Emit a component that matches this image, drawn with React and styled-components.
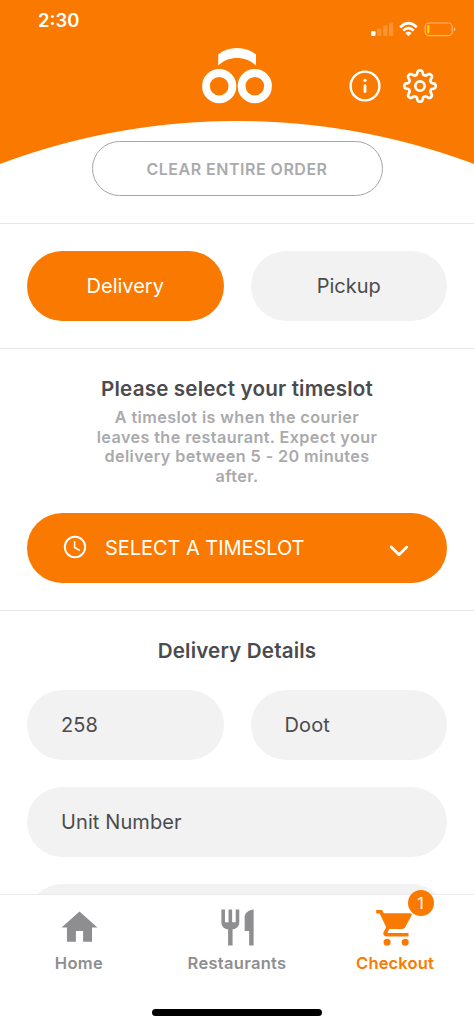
import React from 'react'
import styled, { createGlobalStyle } from 'styled-components'
import { MdHome, MdRestaurant } from 'react-icons/md'

const orange = '#FA7900'

// eight rounded teeth around the centre
const gearPath = () => {
  const points = []
  for (let i = 0; i < 160; i++) {
    const a = (i / 160) * Math.PI * 2
    const w = Math.cos(a * 8)
    const r = 13.6 + 2.1 * Math.tanh(1.6 * w) / Math.tanh(1.6)
    points.push(`${(18 + r * Math.sin(a)).toFixed(2)} ${(18 - r * Math.cos(a)).toFixed(2)}`)
  }
  return `M${points.join('L')}Z`
}

function StatusIcons() {
  return (
    <svg width="86" height="18" viewBox="0 0 86 18" fill="none">
      <rect x="1" y="11" width="4.5" height="5" rx="1.2" fill="#fff" />
      <g fill="#fff" opacity=".2">
        <rect x="7.2" y="8.5" width="4.2" height="7.5" rx="1" />
        <rect x="13.2" y="5.5" width="4.2" height="10.5" rx="1" />
        <rect x="19" y="2.5" width="4.2" height="13.5" rx="1" />
      </g>
      <g stroke="#fff" strokeWidth="2.7">
        <path d="M30.2 7.2Q38.5-.8 46.8 7.2" />
        <path d="M33.3 10.6Q38.5 5.6 43.7 10.6" />
      </g>
      <path d="M35.3 13Q38.5 10 41.7 13L38.5 16.2Z" fill="#fff" />
      <rect x="55.2" y="3" width="27" height="12.6" rx="3.8" stroke="#fff" strokeOpacity=".45" strokeWidth="1.2" />
      <path d="M83.8 7v4.6q1.7-.7 1.7-2.3T83.8 7Z" fill="#fff" opacity=".45" />
      <rect x="57.3" y="5" width="2" height="8.6" rx="1" fill="#FFE100" />
    </svg>
  )
}

function Logo() {
  return (
    <svg width="70" height="56" viewBox="0 0 70 56">
      <g fill="none" stroke="#fff" strokeWidth="7.8">
        <circle cx="17.2" cy="38.2" r="13.2" />
        <circle cx="52.8" cy="38.2" r="13.2" />
      </g>
      <path d="M16.2 6.4C27-2 43-2 54 6.4V17.4C43 7.6 27 7.6 16.2 17.4Z" fill="#fff" />
    </svg>
  )
}

function Cart() {
  return (
    <svg viewBox="0 0 43 43" fill="currentColor">
      <path d="M2.2 4h6l1.6 3.3h26.4q2.2.3 1.3 2.2L31.2 21.3q-1 1.7-2.8 1.7H15.3l-1.7 3.2q-.2.7.5.7h20.4v3.5H12.700q-4.300-.6-3.200-4.200l2.700-5L5.700 7.600H2.200Z" />
      <circle cx="13.1" cy="36.3" r="3.5" />
      <circle cx="31.2" cy="36.3" r="3.5" />
    </svg>
  )
}

const tabs = [
  { id: 1, title: 'Home', icon: <MdHome />, spacing: '0.4px' },
  { id: 2, title: 'Restaurants', icon: <MdRestaurant />, spacing: '0.3px' },
  { id: 3, title: 'Checkout', icon: <Cart />, spacing: '0.15px', active: true, count: 1 },
]

export default function App() {
  return (
    <>
      <GlobalStyle />
      <Screen>
        <Header>
          <StatusBar>
            <Time>2:30</Time>
            <StatusIcons />
          </StatusBar>
          <Brand>
            <Logo />
            <HeaderActions>
              <svg width="32" height="32" viewBox="0 0 32 32" fill="none">
                <circle cx="16" cy="16" r="14.4" stroke="#fff" strokeWidth="2.4" />
                <circle cx="16" cy="10.3" r="1.6" fill="#fff" />
                <path d="M16 15.7v5.8" stroke="#fff" strokeWidth="2.8" strokeLinecap="round" />
              </svg>
              <svg width="36" height="36" viewBox="0 0 36 36" fill="none" stroke="#fff" strokeWidth="2.7">
                <path d={gearPath()} strokeLinejoin="round" />
                <circle cx="18" cy="18" r="4.7" />
              </svg>
            </HeaderActions>
          </Brand>
        </Header>

        <Content>
          <ClearSection>
            <ClearButton>CLEAR ENTIRE ORDER</ClearButton>
          </ClearSection>

          <MethodSection>
            <Method $active>Delivery</Method>
            <Method>Pickup</Method>
          </MethodSection>

          <TimeslotSection>
            <Heading>Please select your timeslot</Heading>
            <Hint>
              A timeslot is when the courier<br />
              leaves the restaurant. Expect your<br />
              delivery between 5 - 20 minutes<br />
              after.
            </Hint>
            <Select>
              <svg width="24" height="24" viewBox="0 0 24 24" fill="none" stroke="#fff">
                <circle cx="12" cy="12" r="10.2" strokeWidth="1.9" />
                <path d="M11.6 6.2v6.3l5.2 3" strokeWidth="1.5" />
              </svg>
              <span>SELECT A TIMESLOT</span>
              <svg width="20" height="12" viewBox="0 0 20 12" fill="none" stroke="#fff" strokeWidth="2.8" strokeLinecap="round" strokeLinejoin="round">
                <path d="M2.2 2l7.8 7.8L17.8 2" />
              </svg>
            </Select>
          </TimeslotSection>

          <DetailsSection>
            <Heading>Delivery Details</Heading>
            <Fields>
              <Field>258</Field>
              <Field>Doot</Field>
              <Field $wide>Unit Number</Field>
              <Field $wide />
            </Fields>
          </DetailsSection>
        </Content>

        <BottomNav>
          <Tabs>
            {tabs.map((tab) => (
              <Tab key={tab.id} $active={tab.active} $spacing={tab.spacing}>
                <IconWrap>
                  {tab.icon}
                  {tab.count && <Badge>{tab.count}</Badge>}
                </IconWrap>
                <span>{tab.title}</span>
              </Tab>
            ))}
          </Tabs>
          <HomeIndicator />
        </BottomNav>
      </Screen>
    </>
  )
}

const GlobalStyle = createGlobalStyle`
  * {
    box-sizing: border-box;
  }
  body {
    margin: 0;
    background: #fff;
  }
  button {
    font: inherit;
    border: 0;
    padding: 0;
  }
  svg {
    display: block;
    flex-shrink: 0;
  }
`

const Screen = styled.div`
  width: 474px;
  height: 1026px;
  display: flex;
  flex-direction: column;
  overflow: hidden;
  background: #fff;
  color: #4b4b4d;
  font-family: Inter, 'Liberation Sans', sans-serif;
`

const Header = styled.header`
  height: 165px;
  flex-shrink: 0;
  background: radial-gradient(circle at 50% 796px, #fff 674.5px, ${orange} 675.5px);
`

const StatusBar = styled.div`
  height: 48px;
  padding: 9px 18px 0 38px;
  display: flex;
  justify-content: space-between;
  svg {
    margin-top: 11px;
  }
`

const Time = styled.span`
  color: #fff;
  font-size: 18.5px;
  line-height: 22px;
  font-weight: 600;
`

const Brand = styled.div`
  display: grid;
  grid-template-columns: 1fr 70px 1fr;
  > svg {
    grid-column: 2;
  }
`

const HeaderActions = styled.div`
  display: flex;
  align-items: center;
  justify-content: flex-end;
  gap: 20.4px;
  height: 36px;
  margin-top: 20px;
  padding-right: 36.3px;
`

const Content = styled.main`
  flex: 1;
  min-height: 0;
  overflow: hidden;
  margin-top: -24px;
`

const Section = styled.section`
  border-bottom: 1px solid #e6e6e6;
`

const ClearSection = styled(Section)`
  height: 83px;
  display: flex;
  justify-content: center;
  align-items: flex-start;
`

const ClearButton = styled.button`
  width: 291px;
  height: 55px;
  border: 1px solid #a5a5a7;
  border-radius: 28px;
  background: #fff;
  color: #aaaaac;
  font-size: 16px;
  font-weight: 600;
  letter-spacing: .5px;
`

const MethodSection = styled(Section)`
  height: 125px;
  padding: 27px 27px 0;
  display: grid;
  grid-template-columns: 1fr 1fr;
  gap: 27px;
`

const Method = styled.button`
  height: 70px;
  border-radius: 35px;
  background: ${({ $active }) => ($active ? orange : '#f2f2f2')};
  color: ${({ $active }) => ($active ? '#fff' : '#4b4b4d')};
  font-size: 20px;
`

const TimeslotSection = styled(Section)`
  height: 262px;
  padding: 27px 27px 0;
`

const Heading = styled.h2`
  margin: 0;
  text-align: center;
  font-size: 20.6px;
  line-height: 26px;
  font-weight: 600;
  letter-spacing: .17px;
`

const Hint = styled.p`
  margin: 6px 0 26.2px;
  text-align: center;
  color: #aaaaac;
  font-size: 16.2px;
  line-height: 19.7px;
  font-weight: 600;
  letter-spacing: .4px;
`

const Select = styled.button`
  width: 100%;
  height: 70px;
  padding: 0 38px 2px 35.5px;
  display: flex;
  align-items: center;
  border-radius: 35px;
  background: ${orange};
  color: #fff;
  font-size: 20px;
  text-align: left;
  span {
    flex: 1;
    margin-left: 18.5px;
    padding-top: 2px;
    letter-spacing: -.05px;
  }
  svg:last-child {
    margin-top: 7px;
  }
`

const DetailsSection = styled.section`
  padding: 27px 27px 0;
`

const Fields = styled.div`
  margin-top: 26px;
  display: grid;
  grid-template-columns: 1fr 1fr;
  gap: 27px;
`

const Field = styled.div`
  height: 70px;
  padding: 0 34px;
  display: flex;
  align-items: center;
  border-radius: 35px;
  background: #f2f2f2;
  font-size: 20px;
  letter-spacing: .1px;
  grid-column: ${({ $wide }) => ($wide ? '1 / -1' : 'auto')};
`

const BottomNav = styled.nav`
  height: 132px;
  flex-shrink: 0;
  border-top: 1px solid #ebebeb;
  background: #fff;
  display: flex;
  flex-direction: column;
  justify-content: space-between;
  align-items: center;
  padding-bottom: 10px;
`

const Tabs = styled.div`
  width: 100%;
  padding-top: 11px;
  display: grid;
  grid-template-columns: repeat(3, 1fr);
`

const Tab = styled.div`
  display: flex;
  flex-direction: column;
  align-items: center;
  color: ${({ $active }) => ($active ? orange : '#8e8e90')};
  font-size: 16.5px;
  line-height: 20px;
  font-weight: 600;
  letter-spacing: ${({ $spacing }) => $spacing};
  > span {
    margin-top: 4px;
  }
`

const IconWrap = styled.div`
  position: relative;
  svg {
    width: 43px;
    height: 43px;
  }
`

const Badge = styled.div`
  position: absolute;
  top: -16px;
  right: -17px;
  width: 26px;
  height: 26px;
  border-radius: 50%;
  background: ${orange};
  color: #fff;
  display: grid;
  place-items: center;
  font-size: 16px;
  font-weight: 400;
`

const HomeIndicator = styled.div`
  width: 170px;
  height: 7px;
  border-radius: 4px;
  background: #000;
`
